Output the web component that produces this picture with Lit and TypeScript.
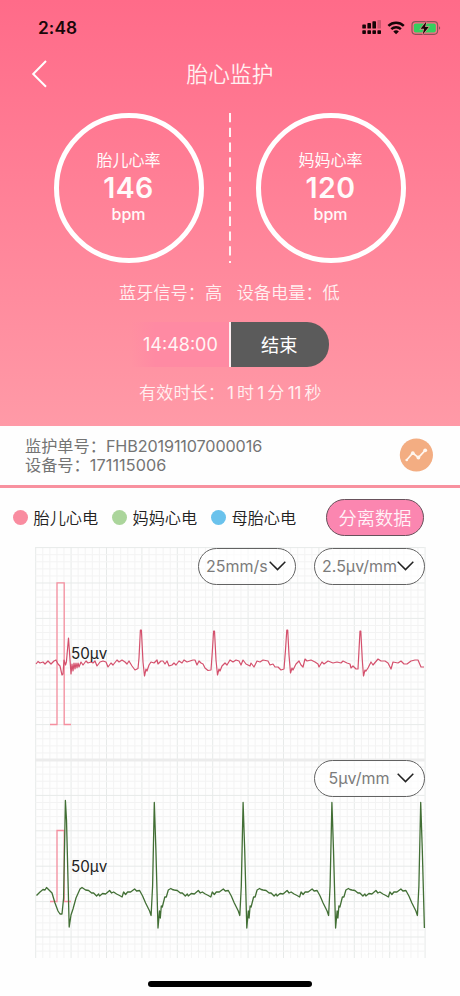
import { LitElement, html, css, svg } from "lit";
import { customElement, property } from "lit/decorators.js";

const FETAL =
  "36,664 38,661.5 40,663 43,662 45,664 48,661 51,664 54,661 56,660 58,664 60,666 62,675 63,674 64,660 65.5,665 66.4,662 68.5,638 71,674 72,664 73,671 74,663 75,669 76,663 77,668 78,663 79,667 81,662 83,665 86,661 88,663 91,662 93,663 95,661 97,666 100,662 103,661 106,662 108,667 111,663 113,665 117,660 119,662 122,660 125,662 127,664 129,661 132,666 135,670 138,668.5 139,658 140.4,630 141.4,630 143,662 144.5,676 146,669 147,671 149,665 151,662 154,663 157,660 158,664 161,661 163,661 165,664 167,661 169,666 172,665 174,663 176,665 179,661 182,663 184,660 187,662 190,661 193,660 195,660 197,665 199,661 201,663 203,664 205,668 208,670.5 211,670 212.3,652 213.6,631 214.5,631 216,660 217.5,675 219,669 220,671 222,666 225,663 227,665 230,660 233,662 236,660 239,661 241,665 243,660 246,664 250,666 251,663 254,667 257,661 260,662 263,660 268,661 270,665 273,664 275,667 278,667 281,670 284,669 285.5,650 286.8,630 287.7,630 289,655 290.5,673 292,668 293,670 296,664 299,661 301,665 303,667 305,659 307,661 311,660 315,662 318,664 319,667 322,662 324,664 328,661 333,663 337,662 341,663 343,661 347,663 350,664 351,668 353,666 356,669 358,669 360,631 360.8,631 362.3,660 363.5,676 365,670 366,671 368,668 371,662 373,665 378,659 381,661 385,661 388,663 391,669 393,662 398,663 401,661 404,664 407,664 411,661 415,660 418,660 421,667 424,667";

// One maternal beat, x measured from the R peak.
const BEAT: [number, number][] = [
  [0, 802.5], [1.6, 850], [3.7, 928], [5.2, 911], [6, 918], [7, 906], [8, 907], [10.5, 897], [12, 897],
  [14, 890], [16.5, 888.5], [18, 889.5], [20, 890], [23, 890.5], [26, 893], [28, 893], [31, 896], [33, 894],
  [34, 896], [37, 893.5], [40, 894], [44, 890.5], [46, 893], [48, 892], [51, 894], [54, 895.5], [56.5, 897],
  [58, 892], [60, 894.5], [62, 892], [65, 892], [69, 889], [71, 891], [74, 890.5], [77, 896], [80, 903],
  [84, 911], [85.5, 915.5], [87, 886],
];
const LEAD =
  "36.5,895.5 40,892 43,889.5 45,890 46.5,887.5 49,890 52,893 55,903 58,911 60,914 62,914 63.6,898 65.4,800.5 66.5,820 69.2,927 71,915 73,909 76,898 80,889 82,887.5";

const maternal = () => {
  const pts = [LEAD];
  for (const [dx, y] of BEAT) if (dx > 18) pts.push(`${65.6 + dx},${y}`);
  for (let i = 0; i < 4; i++) {
    const peak = 154.3 + i * 88.8;
    for (const [dx, y] of BEAT) if (peak + dx <= 424.5) pts.push(`${(peak + dx).toFixed(1)},${y}`);
  }
  return pts.join(" ");
};

const MAJOR = 35.4;
const gridLines = () => {
  const out = [];
  for (let i = 0; i <= 55; i++) {
    const x = 35.7 + (i * MAJOR) / 5;
    out.push(svg`<line x1=${x} x2=${x} y1="547" y2="958" stroke=${i % 5 ? "#f3f3f3" : "#e7eae9"} />`);
  }
  for (let i = 0; i <= 57; i++) {
    const y = 547.6 + (i * MAJOR) / 5;
    out.push(svg`<line x1="35.5" x2="424.7" y1=${y} y2=${y} stroke=${i % 5 ? "#f3f3f3" : "#e7eae9"} />`);
  }
  return out;
};

@customElement("rate-ring")
export class RateRing extends LitElement {
  @property() label = "";
  @property() value = "";
  static styles = css`
    :host { display: flex; flex-direction: column; align-items: center; box-sizing: border-box; width: 150px; height: 150px;
      border: 5.5px solid #fff; border-radius: 50%; padding: 31px 1px 0 0; color: #fffafa; }
    .label { font-size: 16px; line-height: 22px; }
    .value { font-size: 28.5px; line-height: 32px; font-weight: 600; letter-spacing: 0.4px; margin-top: 1px; }
    .unit { font-size: 16px; line-height: 22px; font-weight: 550; margin-top: -1px; }
  `;
  render() {
    return html`<div class="label">${this.label}</div><div class="value">${this.value}</div><div class="unit">bpm</div>`;
  }
}

@customElement("scale-picker")
export class ScalePicker extends LitElement {
  @property() text = "";
  static styles = css`
    :host { display: flex; align-items: center; justify-content: space-between; box-sizing: border-box; height: 37.5px;
      border: 1.3px solid #626262; border-radius: 19px; background: rgba(255, 255, 255, 0.65); color: #7b7b7b; font-size: 16px; }
    svg { display: block; flex: none; }
  `;
  render() {
    return html`<span>${this.text}</span>
      <svg width="17" height="10" viewBox="0 0 17 10" fill="none" stroke="#222" stroke-width="1.5"><path d="M.7.8 8.5 8.6 16.3.8" /></svg>`;
  }
}

@customElement("app-root")
export class AppRoot extends LitElement {
  static styles = css`
    :host { display: flex; flex-direction: column; width: 460px; height: 996px; overflow: hidden; background: #fefefe;
      font-family: Inter, "Noto Sans CJK SC", sans-serif; color: #222; white-space: nowrap; }
    .hero { height: 426px; display: flex; flex-direction: column; background: linear-gradient(#ff6b89, #ff9aa7); color: #fff0f1; }
    .status { height: 56px; display: flex; justify-content: space-between; align-items: center; box-sizing: border-box; padding: 0 19px 0 38px; }
    .clock { font-size: 17.3px; font-weight: 600; color: #190709; letter-spacing: 0.1px; margin-top: -1px; }
    .status svg { display: block; }
    .nav { height: 36px; display: grid; grid-template-columns: 80px 1fr 80px; align-items: center; }
    .nav svg { display: block; margin: -2px 0 0 31px; }
    .title { text-align: center; font-size: 21.7px; line-height: 30px; font-weight: 350; }
    .rings { display: flex; justify-content: space-between; padding: 20.5px 54px 0; height: 151px; width: 352px; }
    .signal { display: flex; gap: 14.5px; padding-left: 119px; margin-top: 16.5px; font-size: 17.2px; line-height: 26px; height: 26px; font-weight: 350; }
    .timer { display: flex; margin: 16px 0 0 131px; height: 44.5px; width: 197.5px; }
    .time { box-sizing: border-box; width: 100px; border-right: 2px solid #fff0f2; padding-left: 12px; line-height: 45px; font-size: 18px;
      background: linear-gradient(90deg, #ff8ea100, #ff8aa3 25%); color: #fff5f5; }
    .stop { flex: 1; background: #5b5b5b; border-radius: 0 22px 22px 0; text-align: center; color: #fff; font-size: 18.2px; line-height: 46px; box-sizing: border-box; padding-right: 1px; }
    .elapsed { display: flex; margin: 13px 0 0 139px; font-size: 17px; line-height: 26px; font-weight: 350; letter-spacing: 0.2px; }
    .elapsed b { font-weight: 400; margin: 0 3px 0 3.2px; letter-spacing: 0; }
    .elapsed b:first-of-type { margin-left: 2px; }
    .info { height: 59px; display: flex; justify-content: space-between; box-sizing: border-box; padding: 11px 27px 0 25px; color: #747474; font-size: 16.2px; line-height: 19px; }
    .order { letter-spacing: -0.13px; }
    .device { letter-spacing: 0.1px; }
    .info svg { display: block; margin-top: 1px; }
    .rule { height: 2.5px; background: #f8919f; }
    .legend { height: 59.5px; display: flex; align-items: center; box-sizing: border-box; padding: 0 36px 0 12.5px; font-size: 16.2px; font-weight: 350; }
    .key { display: flex; align-items: center; gap: 6px; width: 99px; }
    .dot { width: 15px; height: 15px; border-radius: 50%; flex: none; }
    .fetal { background: #f98ca0; }
    .mother { background: #abd59b; }
    .mixed { background: #6ac2ec; }
    .split { margin-left: auto; box-sizing: border-box; width: 98px; height: 37px; border: 1.3px solid #67515b; border-radius: 19px; background: #fb86b0;
      color: #fff3f8; font-size: 18.2px; line-height: 37px; text-align: center; font-weight: 350; }
    .chart { position: relative; height: 412px; }
    .chart > svg { display: block; }
    .chart scale-picker, .mark { position: absolute; }
    .mark { left: 71px; font-size: 15.2px; line-height: 20px; }
    .m1 { top: 97px; }
    .m2 { top: 310px; }
    .speed { left: 197.5px; top: 0.5px; width: 98px; padding: 0 8.5px 0 7.5px; }
    .gain { left: 313.5px; top: 0.5px; width: 111px; padding: 0 10px 0 7.5px; }
    .gain2 { left: 313.5px; top: 212.7px; width: 111px; padding: 0 10px 0 14px; }
    .home { align-self: center; width: 164px; height: 5.5px; border-radius: 3px; background: #000; margin-top: 22px; }
  `;

  render() {
    return html`
      <header class="hero">
        <div class="status">
          <span class="clock">2:48</span>
          <svg width="80" height="18" viewBox="361 19 80 18">
            <g fill="#160507">
              <rect x="362.3" y="24.4" width="3.6" height="4.2" rx=".7" /><rect x="367.4" y="23" width="3.6" height="5.6" rx=".7" />
              <rect x="372.4" y="21.3" width="3.6" height="7.3" rx=".7" /><rect x="377.4" y="20" width="3.6" height="8.6" rx=".7" opacity=".22" />
              <rect x="362.3" y="30.3" width="3.6" height="3.6" rx=".7" /><rect x="367.4" y="30.3" width="3.6" height="3.6" rx=".7" />
              <rect x="372.4" y="30.3" width="3.6" height="3.6" rx=".7" /><rect x="377.4" y="30.3" width="3.6" height="3.6" rx=".7" />
              <path d="M393.3 31.6a4 4 0 0 1 5.6 0L396.1 34.3Z" />
            </g>
            <g fill="none" stroke="#160507" stroke-width="2.5"><path d="M388.4 25.8a11.2 11.2 0 0 1 15.4 0M391.3 29.2a7 7 0 0 1 9.6 0" /></g>
            <rect x="412" y="21.7" width="25.6" height="12.6" rx="3.5" fill="none" stroke="#8d5258" stroke-width="1.2" />
            <path d="M439 26.2c1.6.6 1.6 3 0 3.6Z" fill="#8d5258" />
            <rect x="413.8" y="23.5" width="22" height="9" rx="1.8" fill="#35cf5e" />
            <path d="M426.4 21.6 420.6 28.8h3.5l-1.4 5.6 6-7.4h-3.6Z" fill="#160507" stroke="#ff8496" stroke-width="1.2" paint-order="stroke" />
          </svg>
        </div>
        <div class="nav">
          <svg width="18" height="30" viewBox="0 0 18 30" fill="none" stroke="#fff" stroke-width="2"><path d="M15 3 2.2 16 15 28.7" /></svg>
          <div class="title">胎心监护</div>
        </div>
        <div class="rings">
          <rate-ring label="胎儿心率" value="146"></rate-ring>
          <svg width="2" height="152" viewBox="0 0 2 152"><line x1="1" x2="1" y1="0" y2="150" stroke="#fff3f4" stroke-width="2" stroke-dasharray="9.3 5.5" /></svg>
          <rate-ring label="妈妈心率" value="120"></rate-ring>
        </div>
        <div class="signal"><span>蓝牙信号：高</span><span>设备电量：低</span></div>
        <div class="timer"><div class="time">14:48:00</div><div class="stop">结束</div></div>
        <div class="elapsed">有效时长：<b>1</b>时<b>1</b>分<b>11</b>秒</div>
      </header>
      <section class="info">
        <div><div>监护单号：<span class="order">FHB20191107000016</span></div><div>设备号：<span class="device">171115006</span></div></div>
        <svg width="34" height="34" viewBox="0 0 34 34">
          <circle cx="17.4" cy="17" r="16.6" fill="#f3ad82" />
          <g stroke="#fff6ef" stroke-width="1.7" fill="#fff6ef"><path d="M7.5 22.2 13.8 15 19.4 19.6 26.4 12.2" fill="none" />
          <circle cx="7.7" cy="22" r="1.3" stroke="none" /><circle cx="13.8" cy="15.2" r="1.9" stroke="none" /><circle cx="19.4" cy="19.5" r="1.9" stroke="none" /><circle cx="26.2" cy="12.3" r="1.9" stroke="none" /></g>
        </svg>
      </section>
      <div class="rule"></div>
      <section class="legend">
        <div class="key"><i class="dot fetal"></i>胎儿心电</div>
        <div class="key"><i class="dot mother"></i>妈妈心电</div>
        <div class="key"><i class="dot mixed"></i>母胎心电</div>
        <div class="split">分离数据</div>
      </section>
      <section class="chart">
        <svg width="460" height="412" viewBox="0 547 460 412" fill="none">
          ${gridLines()}
          <line x1="35.5" x2="424.7" y1="760" y2="760" stroke="#ececec" stroke-width="3" />
          <path d="M50 724.5H57V582.8H64.2V724.5H71" stroke="#f58f9f" stroke-width="1.3" />
          <path d="M50 901.5H57V830.5H64.2V901.5H71" stroke="#f58f9f" stroke-width="1.3" />
          <polyline points=${FETAL} stroke="#d4516d" stroke-width="1.2" stroke-linejoin="round" />
          <polyline points=${maternal()} stroke="#426f35" stroke-width="1.3" stroke-linejoin="round" />
        </svg>
        <span class="mark m1">50μv</span><span class="mark m2">50μv</span>
        <scale-picker class="speed" text="25mm/s"></scale-picker>
        <scale-picker class="gain" text="2.5μv/mm"></scale-picker>
        <scale-picker class="gain2" text="5μv/mm"></scale-picker>
      </section>
      <div class="home"></div>
    `;
  }
}
